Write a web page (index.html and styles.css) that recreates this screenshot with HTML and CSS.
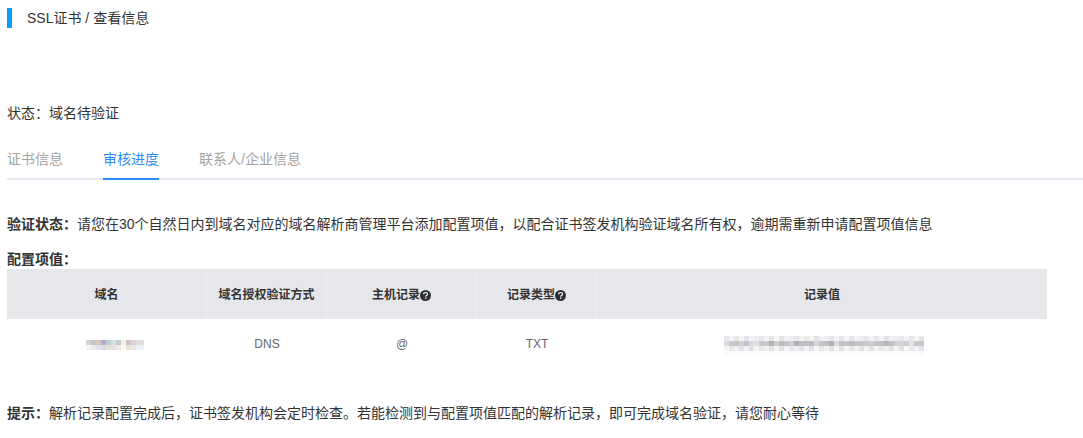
FILE: index.html
```html
<!DOCTYPE html>
<html lang="zh-CN">
<head>
<meta charset="utf-8">
<title>SSL证书 / 查看信息</title>
<link rel="stylesheet" href="styles.css">
</head>
<body>
<header class="page-title">SSL证书 / 查看信息</header>
<p class="status">状态：域名待验证</p>
<nav class="tabs">
  <a class="tab">证书信息</a>
  <a class="tab active">审核进度</a>
  <a class="tab">联系人/企业信息</a>
</nav>
<p class="verify"><b>验证状态：</b>请您在30个自然日内到域名对应的域名解析商管理平台添加配置项值，以配合证书签发机构验证域名所有权，逾期需重新申请配置项值信息</p>
<h4 class="config-title">配置项值：</h4>
<div class="table">
  <div class="row head">
    <div class="cell c1">域名</div>
    <div class="cell c2">域名授权验证方式</div>
    <div class="cell c3">主机记录<svg class="help" viewBox="0 0 11 11"><circle cx="5.5" cy="5.5" r="5.5" fill="#2f2f33"/><path d="M3.6 4.3c0-1.2.9-1.8 2-1.8s1.9.7 1.9 1.6c0 .8-.5 1.1-1 1.5-.5.3-.7.6-.7 1.1" fill="none" stroke="#fff" stroke-width="1.2"/><rect x="5.1" y="7.5" width="1.3" height="1.3" fill="#fff"/></svg></div>
    <div class="cell c4">记录类型<svg class="help" viewBox="0 0 11 11"><circle cx="5.5" cy="5.5" r="5.5" fill="#2f2f33"/><path d="M3.6 4.3c0-1.2.9-1.8 2-1.8s1.9.7 1.9 1.6c0 .8-.5 1.1-1 1.5-.5.3-.7.6-.7 1.1" fill="none" stroke="#fff" stroke-width="1.2"/><rect x="5.1" y="7.5" width="1.3" height="1.3" fill="#fff"/></svg></div>
    <div class="cell c5">记录值</div>
  </div>
  <div class="row body">
    <div class="cell c1">
      <svg class="mosaic m-domain" viewBox="0 0 11.6 2" shape-rendering="crispEdges">
        <rect x="0" y="0" width="1" height="1" fill="#d8cfd2"/><rect x="1" y="0" width="1" height="1" fill="#c6c2bd"/><rect x="2" y="0" width="1" height="1" fill="#d4c9bc"/><rect x="3" y="0" width="1" height="1" fill="#b8aecb"/><rect x="4" y="0" width="1" height="1" fill="#bccfd8"/><rect x="5" y="0" width="1" height="1" fill="#d2e0de"/><rect x="6" y="0" width="1" height="1" fill="#c6cbd8"/><rect x="7" y="0" width="1" height="1" fill="#f4f4e6"/><rect x="8" y="0" width="1" height="1" fill="#d0c4cc"/><rect x="9" y="0" width="1" height="1" fill="#ddd2d6"/><rect x="10" y="0" width="1.6" height="1" fill="#dedede"/>
        <rect x="0" y="1" width="1" height="1" fill="#faf2ec"/><rect x="1" y="1" width="1" height="1" fill="#e6eaf0"/><rect x="2" y="1" width="1" height="1" fill="#dfe4ec"/><rect x="3" y="1" width="1" height="1" fill="#dcd8e4"/><rect x="4" y="1" width="1" height="1" fill="#e0e2dc"/><rect x="5" y="1" width="1" height="1" fill="#e6e2e0"/><rect x="6" y="1" width="1" height="1" fill="#eceaea"/><rect x="7" y="1" width="1" height="1" fill="#fbf9ee"/><rect x="8" y="1" width="1" height="1" fill="#ece0d8"/><rect x="9" y="1" width="1" height="1" fill="#ece6e0"/><rect x="10" y="1" width="1.6" height="1" fill="#e8f2f8"/>
      </svg>
    </div>
    <div class="cell c2">DNS</div>
    <div class="cell c3">@</div>
    <div class="cell c4">TXT</div>
    <div class="cell c5">
      <svg class="mosaic m-value" viewBox="0 0 40 4" shape-rendering="crispEdges">
        <defs>
          <pattern id="topRow" width="7" height="1" patternUnits="userSpaceOnUse">
            <rect x="0" width="1" height="1" fill="#e8e8ec"/><rect x="1" width="1" height="1" fill="#f2f3f5"/><rect x="2" width="1" height="1" fill="#e6e9e6"/><rect x="3" width="1" height="1" fill="#f5f5f3"/><rect x="4" width="1" height="1" fill="#e4e4e8"/><rect x="5" width="1" height="1" fill="#f2f2f6"/><rect x="6" width="1" height="1" fill="#eceef0"/>
          </pattern>
          <pattern id="lowRow" width="6" height="1" patternUnits="userSpaceOnUse">
            <rect x="0" width="1" height="1" fill="#f6f6f6"/><rect x="1" width="1" height="1" fill="#e8e8ea"/><rect x="2" width="1" height="1" fill="#f1f1f3"/><rect x="3" width="1" height="1" fill="#e3e3e5"/><rect x="4" width="1" height="1" fill="#f4f4f4"/><rect x="5" width="1" height="1" fill="#e2e2e4"/>
          </pattern>
        </defs>
        <rect x="0" y="0" width="40" height="1" fill="url(#topRow)"/>
        <rect x="0" y="1" width="1" height="1" fill="#dcdce0"/><rect x="1" y="1" width="1" height="1" fill="#c8cad2"/><rect x="2" y="1" width="1" height="1" fill="#c4c6ce"/><rect x="3" y="1" width="1" height="1" fill="#d2d2cc"/><rect x="4" y="1" width="1" height="1" fill="#c0c4d0"/><rect x="5" y="1" width="1" height="1" fill="#dcdce0"/><rect x="6" y="1" width="1" height="1" fill="#e0e0e4"/><rect x="7" y="1" width="1" height="1" fill="#c8c8cc"/><rect x="8" y="1" width="1" height="1" fill="#c8c8cc"/><rect x="9" y="1" width="1" height="1" fill="#b4b4b8"/>
        <rect x="10" y="1" width="1" height="1" fill="#d0d0d4"/><rect x="11" y="1" width="1" height="1" fill="#bcbcc0"/><rect x="12" y="1" width="1" height="1" fill="#c4c4c8"/><rect x="13" y="1" width="1" height="1" fill="#d0d0d4"/><rect x="14" y="1" width="1" height="1" fill="#b0b0b8"/><rect x="15" y="1" width="1" height="1" fill="#c0c0c4"/><rect x="16" y="1" width="1" height="1" fill="#c0c0c4"/><rect x="17" y="1" width="1" height="1" fill="#b4bccc"/><rect x="18" y="1" width="1" height="1" fill="#d8d8d0"/><rect x="19" y="1" width="1" height="1" fill="#c4c4cc"/>
        <rect x="20" y="1" width="1" height="1" fill="#c0c0c8"/><rect x="21" y="1" width="1" height="1" fill="#b0b0b8"/><rect x="22" y="1" width="1" height="1" fill="#dcdce0"/><rect x="23" y="1" width="1" height="1" fill="#c4c4c8"/><rect x="24" y="1" width="1" height="1" fill="#c4c4cc"/><rect x="25" y="1" width="1" height="1" fill="#bcbcc4"/><rect x="26" y="1" width="1" height="1" fill="#c8c4c0"/><rect x="27" y="1" width="1" height="1" fill="#c4c8cc"/><rect x="28" y="1" width="1" height="1" fill="#c8c8cc"/><rect x="29" y="1" width="1" height="1" fill="#d0ccd0"/>
        <rect x="30" y="1" width="1" height="1" fill="#c4c4cc"/><rect x="31" y="1" width="1" height="1" fill="#c8c0c0"/><rect x="32" y="1" width="1" height="1" fill="#b8b8bc"/><rect x="33" y="1" width="1" height="1" fill="#c0c0c4"/><rect x="34" y="1" width="1" height="1" fill="#c8d0d8"/><rect x="35" y="1" width="1" height="1" fill="#d4d4d8"/><rect x="36" y="1" width="1" height="1" fill="#d0ccd0"/><rect x="37" y="1" width="1" height="1" fill="#e4e4e4"/><rect x="38" y="1" width="1" height="1" fill="#c4c8cc"/><rect x="39" y="1" width="1" height="1" fill="#c4c8d0"/>
        <rect x="0" y="2" width="40" height="1" fill="url(#lowRow)" transform="translate(0 0)"/>
        <rect x="0" y="3" width="40" height="1" fill="#fbfbfb"/>
      </svg>
    </div>
  </div>
</div>
<p class="tip"><b>提示：</b>解析记录配置完成后，证书签发机构会定时检查。若能检测到与配置项值匹配的解析记录，即可完成域名验证，请您耐心等待</p>
</body>
</html>
```
FILE: styles.css
```css
* { box-sizing: border-box; }
html, body { margin: 0; padding: 0; }
body {
  width: 1083px;
  height: 438px;
  overflow: hidden;
  padding: 8px 0 0 7px;
  background: #fff;
  color: #333;
  font: 14px/20px "Liberation Sans", "Noto Sans CJK SC", sans-serif;
}
.page-title {
  height: 20px;
  border-left: 5px solid #069fff;
  padding-left: 15px;
  line-height: 20px;
}
.status { margin: 75px 0 0; line-height: 20px; }
.tabs {
  display: flex;
  gap: 40px;
  margin: 16px 0 0;
  height: 41px;
  border-bottom: 2px solid #e4e8f0;
}
.tab {
  height: 41px;
  line-height: 40px;
  color: #a3a3a3;
}
.tab.active {
  color: #2b8cf3;
  border-bottom: 2px solid #2b8cf3;
}
.verify { margin: 34px 0 0; }
.verify b, .tip b { font-weight: 700; }
.config-title { margin: 15px 0 0; font-size: 14px; line-height: 20px; font-weight: 700; }
.table { width: 1040px; font-size: 12px; }
.row { display: flex; }
.head {
  height: 50px;
  padding-top: 2px;
  background: #e6e7eb;
  font-weight: 700;
  color: #333;
}
.head .cell { height: 48px; }
.head .c1, .head .c2, .head .c3, .head .c4 { border-right: 1px solid #ecedf0; }
.head .c1, .head .c2, .head .c3, .head .c4 { box-shadow: none; }
.body { height: 50px; color: #666; }
.cell { display: flex; align-items: center; justify-content: center; }
.c1 { width: 200px; }
.c2 { width: 120px; }
.c3 { width: 150px; }
.c4 { width: 120px; }
.c5 { flex: 1; }
.help { width: 11px; height: 11px; }
.mosaic { display: block; filter: blur(0.4px); }
.m-domain { width: 58px; height: 10px; margin: 2px 0 0 15px; }
.m-value { width: 200px; height: 20px; margin: 4px 0 0 3px; }
.tip { margin: 34px 0 0; }
```
